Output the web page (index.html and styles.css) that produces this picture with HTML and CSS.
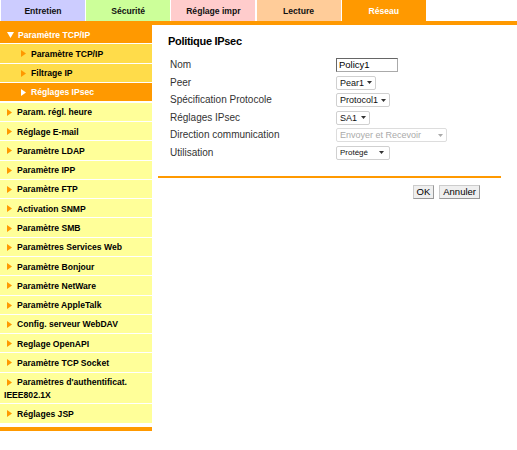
FILE: index.html
```html
<!DOCTYPE html>
<html lang="fr">
<head>
<meta charset="utf-8">
<title>Politique IPsec</title>
<link rel="stylesheet" href="styles.css">
</head>
<body>
<div class="tabs">
  <div class="tab tab-entretien">Entretien</div>
  <div class="tab tab-securite">Sécurité</div>
  <div class="tab tab-reglage">Réglage impr</div>
  <div class="tab tab-lecture">Lecture</div>
  <div class="tab tab-reseau">Réseau</div>
</div>
<div class="tabbar"></div>
<div class="layout">
  <nav class="sidebar">
    <div class="nav-item nav-open"><svg class="ico-down" width="7" height="6" viewBox="0 0 7 6"><path d="M0 0H7L3.5 6Z" fill="#fff"/></svg>Paramètre TCP/IP</div>
    <div class="nav-item nav-sub"><svg class="ico" width="5" height="7" viewBox="0 0 5 7"><path d="M0 0L5 3.5L0 7Z" fill="#ff9900"/></svg>Paramètre TCP/IP</div>
    <div class="nav-item nav-sub"><svg class="ico" width="5" height="7" viewBox="0 0 5 7"><path d="M0 0L5 3.5L0 7Z" fill="#ff9900"/></svg>Filtrage IP</div>
    <div class="nav-item nav-sub nav-active"><svg class="ico" width="5" height="7" viewBox="0 0 5 7"><path d="M0 0L5 3.5L0 7Z" fill="#fff"/></svg>Réglages IPsec</div>
    <div class="nav-item"><svg class="ico" width="5" height="7" viewBox="0 0 5 7"><path d="M0 0L5 3.5L0 7Z" fill="#ff9900"/></svg>Param. régl. heure</div>
    <div class="nav-item"><svg class="ico" width="5" height="7" viewBox="0 0 5 7"><path d="M0 0L5 3.5L0 7Z" fill="#ff9900"/></svg>Réglage E-mail</div>
    <div class="nav-item"><svg class="ico" width="5" height="7" viewBox="0 0 5 7"><path d="M0 0L5 3.5L0 7Z" fill="#ff9900"/></svg>Paramètre LDAP</div>
    <div class="nav-item"><svg class="ico" width="5" height="7" viewBox="0 0 5 7"><path d="M0 0L5 3.5L0 7Z" fill="#ff9900"/></svg>Paramètre IPP</div>
    <div class="nav-item"><svg class="ico" width="5" height="7" viewBox="0 0 5 7"><path d="M0 0L5 3.5L0 7Z" fill="#ff9900"/></svg>Paramètre FTP</div>
    <div class="nav-item"><svg class="ico" width="5" height="7" viewBox="0 0 5 7"><path d="M0 0L5 3.5L0 7Z" fill="#ff9900"/></svg>Activation SNMP</div>
    <div class="nav-item"><svg class="ico" width="5" height="7" viewBox="0 0 5 7"><path d="M0 0L5 3.5L0 7Z" fill="#ff9900"/></svg>Paramètre SMB</div>
    <div class="nav-item"><svg class="ico" width="5" height="7" viewBox="0 0 5 7"><path d="M0 0L5 3.5L0 7Z" fill="#ff9900"/></svg>Paramètres Services Web</div>
    <div class="nav-item"><svg class="ico" width="5" height="7" viewBox="0 0 5 7"><path d="M0 0L5 3.5L0 7Z" fill="#ff9900"/></svg>Paramètre Bonjour</div>
    <div class="nav-item"><svg class="ico" width="5" height="7" viewBox="0 0 5 7"><path d="M0 0L5 3.5L0 7Z" fill="#ff9900"/></svg>Paramètre NetWare</div>
    <div class="nav-item"><svg class="ico" width="5" height="7" viewBox="0 0 5 7"><path d="M0 0L5 3.5L0 7Z" fill="#ff9900"/></svg>Paramètre AppleTalk</div>
    <div class="nav-item"><svg class="ico" width="5" height="7" viewBox="0 0 5 7"><path d="M0 0L5 3.5L0 7Z" fill="#ff9900"/></svg>Config. serveur WebDAV</div>
    <div class="nav-item"><svg class="ico" width="5" height="7" viewBox="0 0 5 7"><path d="M0 0L5 3.5L0 7Z" fill="#ff9900"/></svg>Reglage OpenAPI</div>
    <div class="nav-item"><svg class="ico" width="5" height="7" viewBox="0 0 5 7"><path d="M0 0L5 3.5L0 7Z" fill="#ff9900"/></svg>Paramètre TCP Socket</div>
    <div class="nav-item"><svg class="ico" width="5" height="7" viewBox="0 0 5 7"><path d="M0 0L5 3.5L0 7Z" fill="#ff9900"/></svg>Paramètres d'authentificat. IEEE802.1X</div>
    <div class="nav-item"><svg class="ico" width="5" height="7" viewBox="0 0 5 7"><path d="M0 0L5 3.5L0 7Z" fill="#ff9900"/></svg>Réglages JSP</div>
    <div class="sidebar-end"></div>
  </nav>
  <main class="content">
    <h1 class="title">Politique IPsec</h1>
    <div class="form">
      <div class="label">Nom</div>
      <div class="field"><span class="textbox">Policy1</span></div>
      <div class="label">Peer</div>
      <div class="field"><span class="select w-peer">Pear1<svg class="arrow" width="5" height="3" viewBox="0 0 5 3"><path d="M0 0H5L2.5 3Z" fill="#333"/></svg></span></div>
      <div class="label">Spécification Protocole</div>
      <div class="field"><span class="select w-proto">Protocol1<svg class="arrow" width="5" height="3" viewBox="0 0 5 3"><path d="M0 0H5L2.5 3Z" fill="#333"/></svg></span></div>
      <div class="label">Réglages IPsec</div>
      <div class="field"><span class="select w-sa">SA1<svg class="arrow" width="5" height="3" viewBox="0 0 5 3"><path d="M0 0H5L2.5 3Z" fill="#333"/></svg></span></div>
      <div class="label">Direction communication</div>
      <div class="field"><span class="select w-dir disabled">Envoyer et Recevoir<svg class="arrow" width="5" height="3" viewBox="0 0 5 3"><path d="M0 0H5L2.5 3Z" fill="#aaa"/></svg></span></div>
      <div class="label">Utilisation</div>
      <div class="field"><span class="select w-use small">Protégé<svg class="arrow" width="5" height="3" viewBox="0 0 5 3"><path d="M0 0H5L2.5 3Z" fill="#333"/></svg></span></div>
    </div>
    <div class="rule"></div>
    <div class="actions">
      <span class="btn">OK</span>
      <span class="btn">Annuler</span>
    </div>
  </main>
</div>
</body>
</html>
```
FILE: styles.css
```css
html, body {
  margin: 0;
  padding: 0;
  background: #fff;
  font-family: "Liberation Sans", Arial, sans-serif;
  color: #000;
}

.tabs {
  display: flex;
  gap: 1.2px;
  padding-left: 1px;
  height: 21px;
}
.tab {
  width: 84px;
  height: 21px;
  display: flex;
  align-items: center;
  justify-content: center;
  font-size: 8.6px;
  font-weight: bold;
  color: #111;
}
.tab-entretien { background: #ccccff; }
.tab-securite { background: #ccff99; }
.tab-reglage { background: #ffcccc; }
.tab-lecture { background: #ffcc99; }
.tab-reseau { background: #ff9900; color: #fff; }

.tabbar {
  height: 4px;
  background: #ff9900;
}

.layout {
  display: flex;
  align-items: flex-start;
}

.sidebar {
  width: 152px;
  flex: none;
  display: flex;
  flex-direction: column;
}
.nav-item {
  box-sizing: border-box;
  width: 100%;
  background: #ffff99;
  margin-bottom: 1px;
  padding: 3.6px 4px 2.4px 4px;
  font-size: 8.6px;
  line-height: 12.3px;
  font-weight: bold;
  color: #000;
}
.nav-item .ico {
  display: inline-block;
  margin: 0 5px 0 3px;
  vertical-align: -0.5px;
}
.nav-item .ico-down {
  display: inline-block;
  margin: 0 4px 0 3px;
  vertical-align: 0;
}
.nav-open {
  background: #ff9900;
  color: #fff;
}
.nav-sub {
  background: #ffdc4a;
  padding-left: 17px;
}
.nav-sub .ico {
  margin-left: 4px;
}
.nav-active {
  background: #ff9900;
  color: #fff;
  margin-bottom: 1.6px;
}
.sidebar-end {
  margin-top: 3px;
  height: 4px;
  background: #ff9900;
}

.content {
  margin-left: 6px;
  width: 343px;
}
.title {
  margin: 0;
  padding: 10px 0 0 10px;
  font-size: 11px;
  line-height: 13px;
  letter-spacing: -0.3px;
  font-weight: bold;
  color: #000;
}
.form {
  display: grid;
  grid-template-columns: 166px auto;
  grid-auto-rows: 14px;
  row-gap: 3.5px;
  padding: 10px 0 0 12px;
  align-items: center;
}
.label {
  font-size: 10px;
  color: #333;
  line-height: 14px;
}
.field {
  display: flex;
  height: 14px;
}
.textbox {
  box-sizing: border-box;
  width: 62px;
  height: 14px;
  border: 1px solid #666;
  border-right-color: #aaa;
  border-bottom-color: #aaa;
  font-size: 9.5px;
  line-height: 12px;
  padding-left: 2px;
  color: #000;
}
.select {
  box-sizing: border-box;
  height: 14px;
  border: 1px solid #d0d0d0;
  border-radius: 2px;
  background: #fff;
  display: flex;
  align-items: center;
  justify-content: space-between;
  padding: 0 3px 0 3px;
  font-size: 9px;
  color: #111;
}
.select .arrow { flex: none; }
.w-peer { width: 40px; }
.w-proto { width: 54px; }
.w-sa { width: 34px; }
.w-dir { width: 111px; }
.w-use { width: 54px; padding-right: 5px; }
.disabled { color: #aaa; border-color: #ddd; }
.small { font-size: 8px; }

.rule {
  height: 2px;
  background: #ff9900;
  margin-top: 16px;
}
.actions {
  display: flex;
  justify-content: flex-end;
  gap: 5px;
  padding: 7px 21px 0 0;
}
.btn {
  box-sizing: border-box;
  height: 14px;
  padding: 0 3px;
  border: 1px solid #999;
  border-top-color: #ccc;
  border-left-color: #ccc;
  background: #efefef;
  font-size: 9.5px;
  line-height: 12px;
  color: #000;
}
```
